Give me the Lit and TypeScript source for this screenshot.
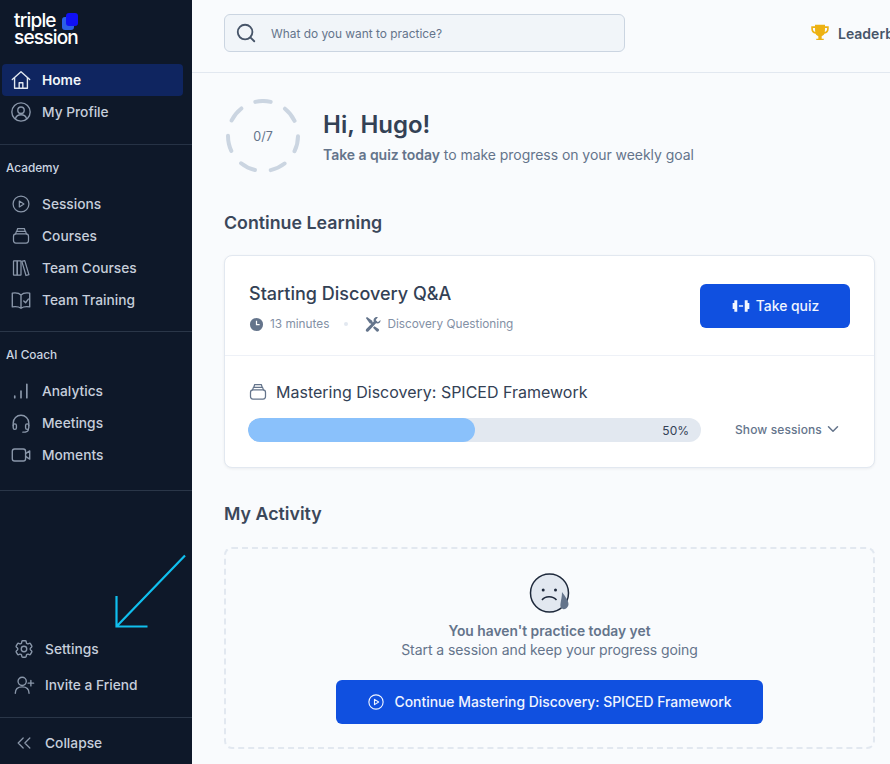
import { LitElement, html, css, svg } from 'lit';
import { customElement } from 'lit/decorators.js';

const line = (content: unknown, size = 20, weight = 1.5) => html`<svg
  width=${size} height=${size} viewBox="0 0 24 24" fill="none" stroke="currentColor"
  stroke-width=${weight} stroke-linecap="round" stroke-linejoin="round">${content}</svg>`;

const stack = svg`<path d="M7 6.500 8 3h8l1 3.500"/><path d="M5.500 9.500 6.500 6.500h11l1 3"/><rect x="3" y="9.500" width="18" height="11" rx="3"/>`;
const play = svg`<circle cx="12" cy="12" r="9.500"/><path d="M10 8.500v7l5.500-3.500z"/>`;

const icons = {
  home: line(svg`<path d="M2.500 11.500 12 3l9.500 8.500"/><path d="M5 9.500V21h14V9.500"/><path d="M10 21v-6h4v6"/>`, 22),
  profile: line(svg`<circle cx="12" cy="12" r="10"/><circle cx="12" cy="10" r="3.500"/><path d="M6 19c1-3 3.500-4 6-4s5 1 6 4"/>`, 22),
  play: line(play),
  stack: line(stack),
  books: line(svg`<rect x="3" y="3.500" width="4.500" height="17" rx=".5"/><rect x="7.500" y="3.500" width="4.500" height="17" rx=".5"/><path d="m13 4 3.500-.8L21.500 20l-3.500 1z"/>`),
  training: line(svg`<path d="M12 6.500C10 4.500 6 4 2.500 4.500v15c3.500-.5 7.500 0 9.500 1.500 2-1.500 6-2 9.500-1.500v-15C18 4 14 4.500 12 6.500zM12 6.500V21"/><path d="m15 13 2 2 3-4"/>`, 22),
  bars: line(svg`<path d="M4.500 20v-2M12 20v-8M19 20V4"/>`, 20, 2),
  headset: line(svg`<path d="M3.500 15v-3a8.500 8.500 0 0 1 17 0v3"/><rect x="3.500" y="13" width="3.500" height="6" rx="1.700"/><rect x="17" y="13" width="3.500" height="6" rx="1.700"/><path d="M20 19c0 2.500-3 3-6 3"/>`, 22),
  video: line(svg`<rect x="2.500" y="5.500" width="14.500" height="13" rx="2.500"/><path d="m17 10.500 4.500-3v9l-4.500-3"/>`, 22),
  gear: line(svg`<path d="M9.594 3.940c.09-.542.56-.94 1.110-.94h2.593c.55 0 1.020.398 1.110.94l.213 1.281c.063.374.313.686.645.87.074.04.147.083.22.127.325.196.72.257 1.075.124l1.217-.456a1.125 1.125 0 0 1 1.370.49l1.296 2.247a1.125 1.125 0 0 1-.26 1.431l-1.003.827c-.293.241-.438.613-.43.992a7.723 7.723 0 0 1 0 .255c-.008.378.137.75.43.991l1.004.827c.424.35.534.955.26 1.430l-1.298 2.247a1.125 1.125 0 0 1-1.369.491l-1.217-.456c-.355-.133-.75-.072-1.076.124a6.470 6.470 0 0 1-.22.128c-.331.183-.581.495-.644.869l-.213 1.281c-.09.543-.56.94-1.110.94h-2.594c-.55 0-1.019-.398-1.110-.94l-.213-1.281c-.062-.374-.312-.686-.644-.87a6.520 6.520 0 0 1-.22-.127c-.325-.196-.72-.257-1.076-.124l-1.217.456a1.125 1.125 0 0 1-1.369-.49l-1.297-2.247a1.125 1.125 0 0 1 .26-1.431l1.004-.827c.292-.24.437-.613.43-.991a6.932 6.932 0 0 1 0-.255c.007-.38-.138-.751-.43-.992l-1.004-.827a1.125 1.125 0 0 1-.26-1.430l1.297-2.247a1.125 1.125 0 0 1 1.370-.491l1.216.456c.356.133.751.072 1.076-.124.072-.044.146-.086.22-.128.332-.183.582-.495.644-.869l.214-1.280z"/><circle cx="12" cy="12" r="3"/>`, 22),
  invite: line(svg`<circle cx="10" cy="8" r="4.500"/><path d="M2.500 21c0-4.500 3-7 7.500-7s7.500 2.500 7.500 7"/><path d="M19.500 7v6M16.500 10h6"/>`, 22),
  collapse: line(svg`<path d="m11 6-6 6 6 6M19 6l-6 6 6 6"/>`),
};

const sections = [
  { label: 'Academy', items: [['Sessions', icons.play], ['Courses', icons.stack], ['Team Courses', icons.books], ['Team Training', icons.training]] },
  { label: 'AI Coach', items: [['Analytics', icons.bars], ['Meetings', icons.headset], ['Moments', icons.video]] },
];

@customElement('app-root')
export class AppRoot extends LitElement {
  static styles = css`
    :host {
      display: flex;
      position: relative;
      width: 890px;
      height: 764px;
      overflow: hidden;
      background: #f9fbfd;
      font-family: Inter, 'Liberation Sans', sans-serif;
      color: #334155;
    }

    svg {
      display: block;
      flex: none;
    }

    /* sidebar */
    .sidebar {
      width: 192px;
      flex: none;
      display: flex;
      flex-direction: column;
      box-sizing: border-box;
      background: #0e1829;
      color: #c6cedb;
      font-size: 13.750px;
      font-weight: 500;
    }

    .logo {
      height: 64px;
      box-sizing: border-box;
      padding: 13px 0 0 14px;
      color: #fff;
      font-size: 19px;
      line-height: 16.500px;
      letter-spacing: -0.8px;
    }

    .logo-line {
      display: flex;
    }

    .logo-mark {
      position: relative;
      width: 16px;
      height: 17px;
      margin-left: 6px;
    }

    .logo-mark i {
      position: absolute;
      width: 12px;
      height: 13px;
      border-radius: 3px;
      background: #2b5fe6;
      left: 0;
      top: 4px;
    }

    .logo-mark i + i {
      background: #1010f5;
      left: 4px;
      top: 0;
    }

    .nav-group {
      display: flex;
      flex-direction: column;
      padding: 0 9px 0 2px;
    }

    .item {
      display: flex;
      align-items: center;
      gap: 10px;
      height: 32px;
      box-sizing: border-box;
      padding-left: 8px;
      border-radius: 4px;
    }

    .item svg {
      color: #8a97aa;
    }

    .ico {
      width: 22px;
      display: flex;
      justify-content: center;
    }

    .item.active {
      background: #0f2560;
      color: #f1f5f9;
      font-weight: 600;
    }

    .item.active svg {
      color: #e2e8f0;
    }

    .top-nav {
      height: 81px;
      box-sizing: border-box;
      border-bottom: 1px solid #263245;
    }

    .section {
      border-bottom: 1px solid #2a3648;
      padding-top: 14px;
      box-sizing: border-box;
    }

    .section-label {
      padding-left: 4px;
      font-size: 11.800px;
      line-height: 18px;
      margin-bottom: 11px;
      color: #cbd5e1;
    }

    .academy { height: 187px; }
    .coach { height: 159px; }

    .grow {
      flex: 1;
    }

    .bottom {
      display: flex;
      flex-direction: column;
      gap: 4px;
      padding: 0 9px 16px 5px;
    }

    .collapse {
      border-top: 1px solid #2a3648;
      height: 47px;
      box-sizing: border-box;
      padding: 9px 9px 0 5px;
    }

    .arrow {
      position: absolute;
      left: 110px;
      top: 550px;
    }

    /* main */
    .main {
      flex: 1;
      min-width: 0;
      display: flex;
      flex-direction: column;
    }

    .topbar {
      height: 73px;
      flex: none;
      box-sizing: border-box;
      border-bottom: 1px solid #e2e8f0;
      display: flex;
      align-items: flex-start;
      padding: 14px 0 0 32px;
    }

    .search {
      width: 401px;
      height: 38px;
      flex: none;
      box-sizing: border-box;
      display: flex;
      align-items: center;
      gap: 14px;
      padding-left: 10px;
      background: #f1f5f9;
      border: 1px solid #cbd5e1;
      border-radius: 6px;
      color: #64748b;
      font-size: 11.900px;
    }

    .search svg {
      color: #475569;
    }

    .leader {
      display: flex;
      align-items: center;
      gap: 8px;
      height: 38px;
      margin-left: 185px;
      font-size: 14px;
      font-weight: 600;
      color: #475569;
      white-space: nowrap;
    }

    .content {
      padding: 26px 15px 0 32px;
      display: flex;
      flex-direction: column;
    }

    .greeting {
      display: flex;
      align-items: center;
      gap: 21px;
      height: 74px;
    }

    .ring {
      position: relative;
      width: 78px;
      height: 74px;
      display: flex;
      align-items: center;
      justify-content: center;
      font-size: 12.500px;
      color: #64748b;
    }

    .ring svg {
      position: absolute;
      left: 2px;
      top: 0;
    }

    h1 {
      margin: 0 0 3px;
      font-size: 24px;
      line-height: 34px;
      font-weight: 600;
      color: #334155;
    }

    .sub {
      font-size: 14px;
      line-height: 20px;
      color: #64748b;
      letter-spacing: -0.05px;
    }

    .sub b {
      font-weight: 600;
    }

    h2 {
      margin: 0;
      font-size: 17.800px;
      line-height: 26px;
      font-weight: 600;
      color: #3b475a;
    }

    .continue {
      margin-top: 37px;
    }

    .card {
      margin-top: 19px;
      height: 213px;
      box-sizing: border-box;
      background: #fff;
      border: 1px solid #e2e8f0;
      border-radius: 8px;
      box-shadow: 0 1px 3px rgba(15, 23, 42, 0.06);
    }

    .card-top {
      height: 100px;
      box-sizing: border-box;
      padding: 28px 24px 0 24px;
      border-bottom: 1px solid #eef1f7;
      display: flex;
      justify-content: space-between;
    }

    .card-title {
      font-size: 18px;
      line-height: 20px;
      font-weight: 500;
      color: #334155;
    }

    .meta {
      display: flex;
      align-items: center;
      margin-top: 11px;
      font-size: 11.800px;
      line-height: 18px;
      color: #8390a5;
    }

    .meta svg {
      color: #64748b;
    }

    .clock {
      margin-right: 6px;
    }

    .wrench {
      margin-right: 5px;
    }

    .dot {
      width: 4px;
      height: 4px;
      border-radius: 50%;
      background: #e2e8f0;
      margin: 0 16px 0 15px;
    }

    .btn {
      display: flex;
      align-items: center;
      justify-content: center;
      background: #1050e0;
      color: #f1f5ff;
      border-radius: 6px;
      font-size: 13.900px;
      font-weight: 500;
    }

    .quiz {
      width: 150px;
      height: 44px;
      gap: 5px;
    }

    .course {
      padding: 24px 0 0 23px;
    }

    .course-title {
      display: flex;
      align-items: center;
      gap: 8px;
      font-size: 16px;
      line-height: 24px;
      font-weight: 400;
      color: #334155;
    }

    .course-title svg {
      color: #64748b;
    }

    .progress-row {
      display: flex;
      align-items: center;
      margin-top: 14px;
    }

    .track {
      width: 453px;
      height: 24px;
      flex: none;
      box-sizing: border-box;
      display: flex;
      justify-content: flex-end;
      align-items: center;
      position: relative;
      padding-right: 12px;
      background: #e2e8f0;
      border-radius: 12px;
      font-size: 12px;
      color: #334155;
      overflow: hidden;
    }

    .fill {
      position: absolute;
      left: 0;
      top: 0;
      bottom: 0;
      background: #8ac1fb;
      border-radius: 12px;
    }

    .show {
      display: flex;
      align-items: center;
      gap: 2px;
      margin: 0 0 2px 34px;
      font-size: 12px;
      font-weight: 500;
      color: #64748b;
      letter-spacing: 0.1px;
    }

    .activity {
      margin-top: 33px;
    }

    .empty {
      margin-top: 20px;
      height: 202px;
      box-sizing: border-box;
      border: 2px dashed #e2e8f0;
      border-radius: 8px;
      display: flex;
      flex-direction: column;
      align-items: center;
      padding-top: 23px;
    }

    .empty-title {
      margin-top: 8px;
      font-size: 13.800px;
      line-height: 19px;
      font-weight: 600;
      color: #64748b;
    }

    .empty-sub {
      margin-top: -1px;
      font-size: 14px;
      line-height: 19px;
      color: #64748b;
      letter-spacing: -0.07px;
    }

    .cta {
      margin-top: 21px;
      width: 427px;
      height: 44px;
      gap: 9px;
    }
  `;

  renderItem(label: unknown, icon: unknown, active = false) {
    return html`<div class="item ${active ? 'active' : ''}">
      <span class="ico">${icon}</span><span>${label}</span>
    </div>`;
  }

  renderSidebar() {
    return html`<nav class="sidebar">
      <div class="logo">
        <div class="logo-line">
          <span>triple</span>
          <span class="logo-mark"><i></i><i></i></span>
        </div>
        <div>session</div>
      </div>
      <div class="nav-group top-nav">
        ${this.renderItem('Home', icons.home, true)}
        ${this.renderItem('My Profile', icons.profile)}
      </div>
      ${sections.map(
        (s, i) => html`<div class="section nav-group ${i ? 'coach' : 'academy'}">
          <div class="section-label">${s.label}</div>
          ${s.items.map(([label, icon]) => this.renderItem(label, icon))}
        </div>`
      )}
      <div class="grow"></div>
      <div class="bottom">
        ${this.renderItem('Settings', icons.gear)}
        ${this.renderItem('Invite a Friend', icons.invite)}
      </div>
      <div class="collapse">${this.renderItem('Collapse', icons.collapse)}</div>
    </nav>`;
  }

  render() {
    return html`
      ${this.renderSidebar()}
      <svg class="arrow" width="80" height="82" viewBox="0 0 80 82" fill="none" stroke="#10bfee" stroke-width="2.200">
        <path d="M75 5.500 7 76M6.500 46v30.500h31"/>
      </svg>
      <main class="main">
        <header class="topbar">
          <div class="search">
            ${line(svg`<circle cx="11" cy="11" r="8"/><path d="m17 17 4 4"/>`, 22, 2)}
            <span>What do you want to practice?</span>
          </div>
          <div class="leader">
            <svg width="20" height="20" viewBox="0 0 24 24" fill="#edb213">
              <path d="M6 2h12v2h4.500v3c0 3.500-2 5.500-5.200 6-.8 1.600-2 2.500-3.300 2.800V19h2.500v1.500H7.500V19H10v-3.200C8.700 15.500 7.500 14.600 6.700 13 3.500 12.500 1.500 10.500 1.500 7V4H6zM3.500 6v1c0 2 1 3.300 2.800 3.800C6.100 9.700 6 8 6 6zm17 0H18c0 2-.1 3.700-.3 4.800 1.800-.5 2.800-1.800 2.800-3.800z"/>
            </svg>
            <span>Leaderboard</span>
          </div>
        </header>
        <div class="content">
          <section class="greeting">
            <div class="ring">
              <svg width="74" height="74" viewBox="0 0 74 74" fill="none" stroke="#cbd5e1" stroke-width="4" stroke-linecap="round">
                <circle cx="37" cy="37" r="35" stroke-dasharray="15.500 15.917" transform="rotate(-102.700 37 37)"/>
              </svg>
              <span>0/7</span>
            </div>
            <div>
              <h1>Hi, Hugo!</h1>
              <div class="sub"><b>Take a quiz today</b> to make progress on your weekly goal</div>
            </div>
          </section>

          <h2 class="continue">Continue Learning</h2>
          <section class="card">
            <div class="card-top">
              <div>
                <div class="card-title">Starting Discovery Q&amp;A</div>
                <div class="meta">
                  <svg class="clock" width="15" height="15" viewBox="0 0 24 24" fill="currentColor">
                    <path fill-rule="evenodd" d="M12 1.500a10.500 10.500 0 1 1 0 21 10.500 10.500 0 0 1 0-21zM11 6v7h6v-2h-4V6z"/>
                  </svg>
                  <span>13 minutes</span>
                  <span class="dot"></span>
                  <svg class="wrench" width="18" height="18" viewBox="0 0 24 24" fill="currentColor">
                    <path d="M4 2.500 2.500 4l5 7 2 .5 2 2 2-2-2-2-.5-2zM22 6.500l-3.500 3-3-3 3-3.500c-3-1-6.500 1.500-5.500 5.500L3 18.500a2 2 0 1 0 3 3L16 11c4 1 6.500-1.500 6-4.500zM14 15l-2 2 4.500 4.500a2 2 0 0 0 3-3z"/>
                  </svg>
                  <span>Discovery Questioning</span>
                </div>
              </div>
              <div class="btn quiz">
                <svg width="20" height="20" viewBox="0 0 24 24" fill="currentColor">
                  <path d="M2 8.500h2V5h3.500v14H4v-3.500H2zM22 8.500h-2V5h-3.500v14H20v-3.500h2zM9.500 11h5v2h-5z"/>
                </svg>
                <span>Take quiz</span>
              </div>
            </div>
            <div class="course">
              <div class="course-title">
                ${line(stack, 20)}
                <span>Mastering Discovery: SPICED Framework</span>
              </div>
              <div class="progress-row">
                <div class="track">
                  <div class="fill" style="width: 50%"></div>
                  <span>50%</span>
                </div>
                <div class="show">
                  <span>Show sessions</span>
                  ${line(svg`<path d="m6 9 6 6 6-6"/>`, 18, 2)}
                </div>
              </div>
            </div>
          </section>

          <h2 class="activity">My Activity</h2>
          <section class="empty">
            <svg width="42" height="42" viewBox="0 0 42 42">
              <circle cx="20.500" cy="21" r="19" fill="#e2e8f0" stroke="#1e293b" stroke-width="1.500"/>
              <circle cx="14.200" cy="18" r="1.500" fill="#1e293b"/>
              <circle cx="26.500" cy="18" r="1.500" fill="#1e293b"/>
              <path d="M13 28c3-4.500 11-4.500 14.500 0" fill="none" stroke="#1e293b" stroke-width="1.500"/>
              <path d="M33 20c2 3 6.500 8 6.500 12 0 3-3 6-5.500 5-2.500-.8-3-3-2.500-5.500.5-3 1.500-7 1.500-11.500z" fill="#64748b"/>
            </svg>
            <div class="empty-title">You haven't practice today yet</div>
            <div class="empty-sub">Start a session and keep your progress going</div>
            <div class="btn cta">
              ${line(play, 18)}
              <span>Continue Mastering Discovery: SPICED Framework</span>
            </div>
          </section>
        </div>
      </main>
    `;
  }
}
